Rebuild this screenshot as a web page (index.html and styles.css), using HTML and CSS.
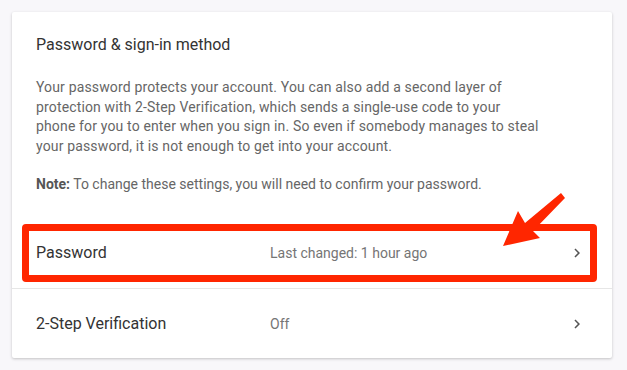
FILE: index.html
```html
<!DOCTYPE html>
<html lang="en">
<head>
  <meta charset="UTF-8" />
  <meta name="viewport" content="width=device-width, initial-scale=1.0"/>
  <title>Password &amp; sign-in method</title>
  <link rel="stylesheet" href="styles.css">
</head>
<body>
  <main class="card">
    <div class="card-head">
      <h2 class="title">Password &amp; sign-in method</h2>
      <p class="desc">
        Your password protects your account. You can also add a second layer of<br>
        protection with 2-Step Verification, which sends a single-use code to your<br>
        phone for you to enter when you sign in. So even if somebody manages to steal<br>
        your password, it is not enough to get into your account.
      </p>
      <p class="desc"><b>Note:</b> To change these settings, you will need to confirm your password.</p>
    </div>
    <div class="row row-first">
      <span class="label">Password</span>
      <span class="value">Last changed: 1 hour ago</span>
      <svg class="chev" viewBox="0 0 24 24"><path d="M10 6L8.59 7.41 13.17 12l-4.58 4.59L10 18l6-6z"/></svg>
      <div class="highlight"></div>
    </div>
    <div class="row">
      <span class="label">2-Step Verification</span>
      <span class="value">Off</span>
      <svg class="chev" viewBox="0 0 24 24"><path d="M10 6L8.59 7.41 13.17 12l-4.58 4.59L10 18l6-6z"/></svg>
    </div>
  </main>
  <svg class="arrow" viewBox="0 0 627 370">
    <polygon points="561,193 565,198 533,231 540,238 503,246 518,211 525,223" />
  </svg>
</body>
</html>
```

FILE: styles.css
```css
body {
  margin: 0;
  padding: 12px;
  background-color: #f8f7fa;
  font-family: Roboto, 'Noto Sans', sans-serif;
  color: #333;
}
.card {
  width: 600px;
  height: 346px;
  background: #fff;
  box-shadow: 0 1px 3px rgba(0, 0, 0, 0.22);
  border-radius: 2px;
}
.card-head {
  padding: 24px 24px 0;
}
.title {
  margin: 0;
  font-size: 16px;
  line-height: 18px;
  font-weight: 400;
  color: #333;
}
.desc {
  margin: 24px 0 0;
  font-size: 14px;
  line-height: 19.5px;
  letter-spacing: 0.15px;
  color: #666;
}
.desc + .desc { margin-top: 19px; letter-spacing: 0; }
.desc b { font-weight: 700; color: #555; }
.row {
  position: relative;
  display: grid;
  grid-template-columns: 234px 1fr auto;
  align-items: center;
  height: 70px;
  padding: 0 26px 0 24px;
  border-top: 1px solid #e6e6e6;
}
.row-first {
  margin-top: 23px;
  border-top: none;
  border-bottom: 1px solid #e6e6e6;
}
.row-first + .row { border-top: none; }
.label {
  font-size: 16px;
  color: #333;
}
.value {
  font-size: 14px;
  color: #757575;
}
.chev {
  width: 18px;
  height: 18px;
  fill: #555;
}
.highlight {
  position: absolute;
  left: 10px;
  right: 15px;
  top: 6px;
  bottom: 6px;
  border: 7px solid #ff2600;
  border-radius: 4px;
  pointer-events: none;
}
.arrow {
  position: absolute;
  left: 0;
  top: 0;
  width: 627px;
  height: 370px;
  fill: #ff2600;
  pointer-events: none;
}
```
